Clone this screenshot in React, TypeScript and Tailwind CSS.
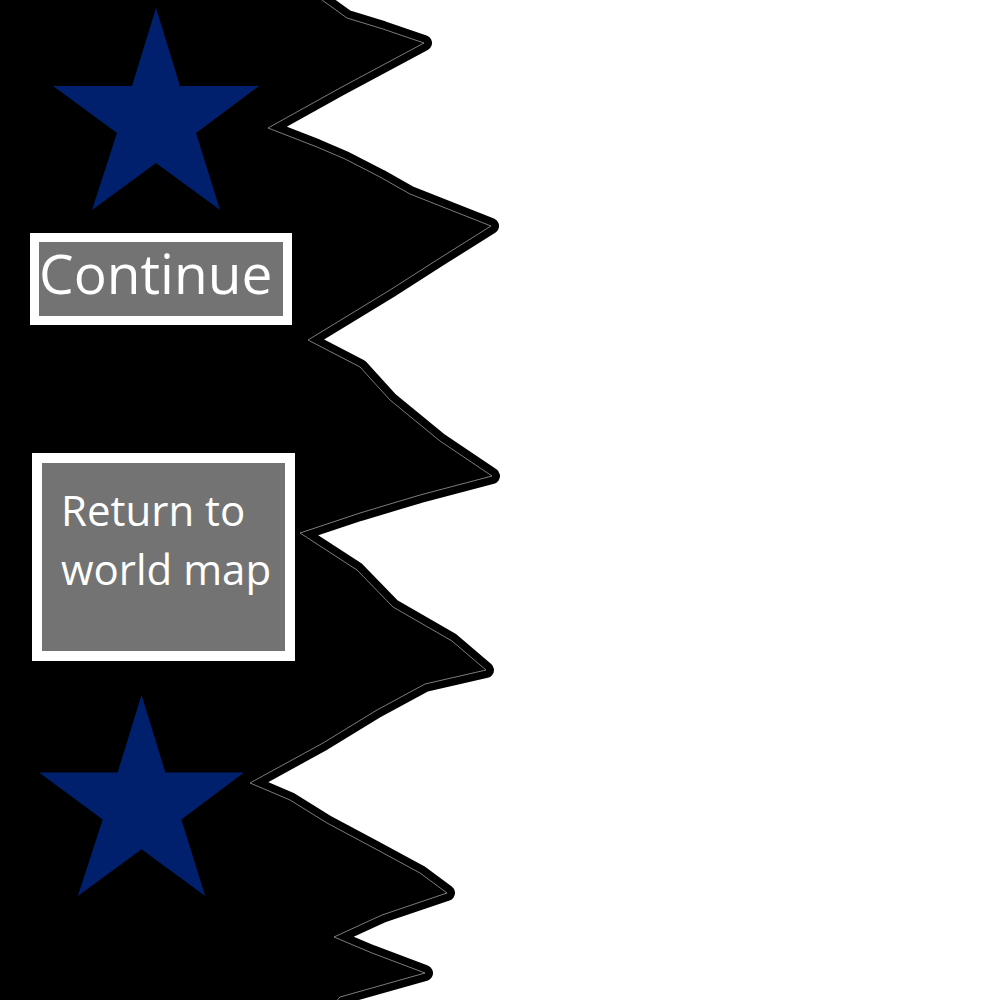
const edge =
  "M -20 -20 L 318 -20 L 322 0 L 347 18 L 383 29 L 424 43 " +
  "L 340 88 L 268 128 L 317 147 L 345 159 L 380 177 L 410 194 L 491 226 " +
  "L 440 258 L 390 290 L 308 340 L 360 367 L 390 400 L 440 441 L 492 476 " +
  "L 420 495 L 360 513 L 300 533 L 357 570 L 393 607 L 452 641 L 486 670 " +
  "L 425 684 L 377 710 L 323 743 L 250 783 L 290 800 L 327 823 L 372 847 L 420 873 L 447 893 " +
  "L 382 915 L 334 937 L 372 953 L 425 973 L 340 997 L 320 1020 L -20 1020 Z";

function Star({ className }: { className: string }) {
  return (
    <svg className={className} viewBox="0 0 206 202" aria-hidden="true">
      <polygon
        points="103,0 127,78 206,78 143,125 167,202 103,155 39,202 64,125 0,78 79,78"
        fill="#00206e"
      />
    </svg>
  );
}

export default function App() {
  return (
    <div className="relative w-[1000px] h-[1000px] overflow-hidden bg-white font-['Open_Sans',sans-serif]">
      {/* torn black panel */}
      <svg className="absolute inset-0 w-[1000px] h-[1000px]" viewBox="0 0 1000 1000" aria-hidden="true">
        <path d={edge} fill="#000" stroke="#000" strokeWidth={16} strokeLinejoin="round" />
        <path d={edge} fill="none" stroke="#9a9a9a" strokeWidth={0.8} strokeLinejoin="round" />
      </svg>

      <div className="relative flex flex-col items-start">
        <Star className="ml-[53px] mt-[8px] w-[206px] h-[202px]" />

        <button className="ml-[30px] mt-[23px] w-[262px] h-[92px] border-[9px] border-white bg-[#737373] text-left">
          <span className="block pl-0 text-[55px] leading-[55px] text-white -mt-[13px]">Continue</span>
        </button>

        <button className="ml-[32px] mt-[128px] w-[263px] h-[208px] border-[10px] border-white bg-[#737373] text-left self-start">
          <span className="flex h-full items-start pl-[19px] pt-[17px] text-[42px] leading-[59px] text-white">
            Return to
            <br />
            world map
          </span>
        </button>

        <Star className="ml-[39px] mt-[34px] w-[205px] h-[201px]" />
      </div>
    </div>
  );
}
